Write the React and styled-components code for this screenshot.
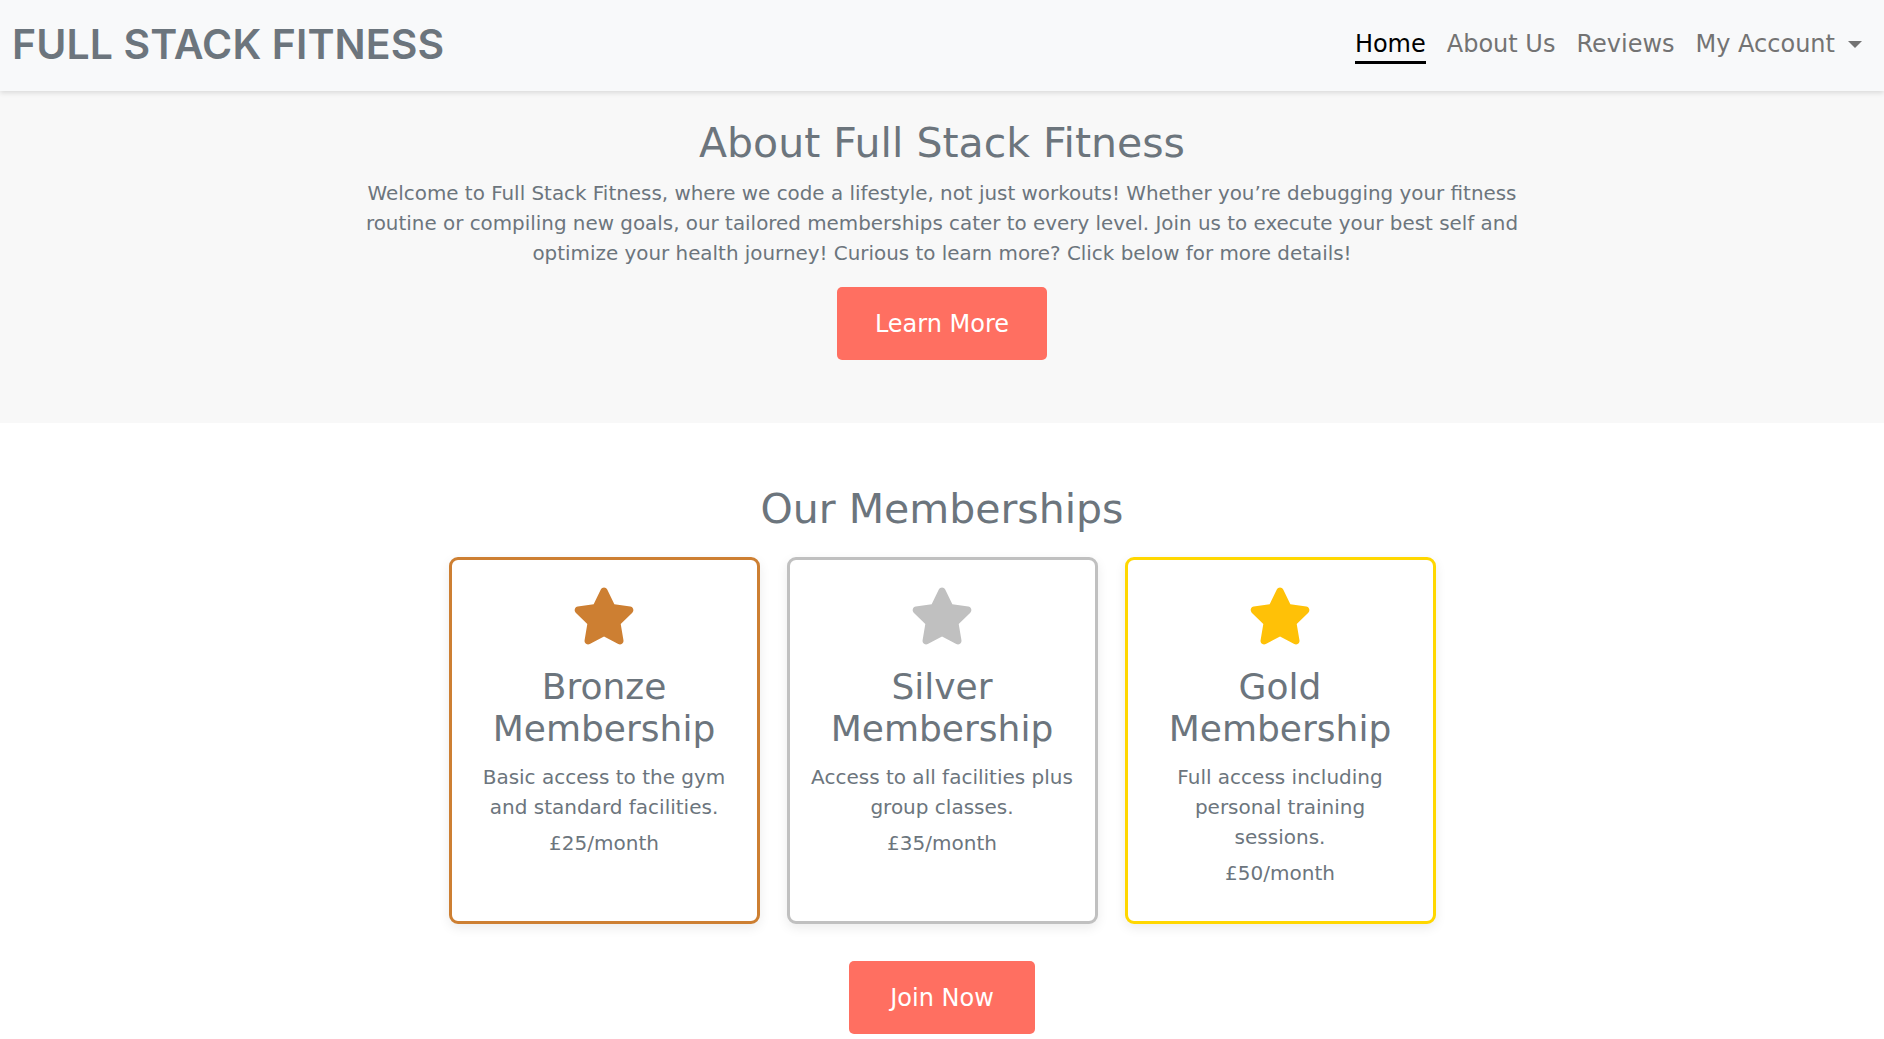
import React from "react"
import styled, { createGlobalStyle } from "styled-components"
import { FaStar } from "react-icons/fa6"

const GlobalStyle = createGlobalStyle`
  * { box-sizing: border-box; }
  body {
    margin: 0;
    font-family: "DejaVu Sans", "Liberation Sans", sans-serif;
    color: #6c757d;
    background: #fff;
  }
`

const Navbar = styled.nav`
  height: 91px;
  display: flex;
  align-items: center;
  justify-content: space-between;
  padding: 0 22px 0 12px;
  background: #f8f9fa;
  box-shadow: 0 2px 5px rgba(0, 0, 0, 0.12);
  position: relative;
  z-index: 1;
`

const Brand = styled.a`
  font-family: Inter, "DejaVu Sans", sans-serif;
  font-size: 41px;
  font-weight: 600;
  letter-spacing: 0.1px;
  color: #6c757d;
  text-decoration: none;
  margin-top: -3px;
`

const NavLinks = styled.ul`
  display: flex;
  align-items: center;
  gap: 21px;
  list-style: none;
  margin: 0;
  padding: 0;
`

const NavLink = styled.a`
  font-size: 24px;
  color: ${p => (p.$active ? "#000" : "#737373")};
  text-decoration: none;
  padding-bottom: 3px;
  border-bottom: 3px solid ${p => (p.$active ? "#000" : "transparent")};
  display: inline-flex;
  align-items: center;
  margin-top: 3px;
`

const Caret = styled.span`
  display: inline-block;
  margin-left: 13px;
  border-top: 7px solid #737373;
  border-left: 7px solid transparent;
  border-right: 7px solid transparent;
`

const Hero = styled.section`
  background: #f8f8f8;
  padding: 28px 20px 63px;
  text-align: center;
`

const SectionTitle = styled.h2`
  font-size: 41px;
  font-weight: 400;
  line-height: 48px;
  margin: 0;
  color: #6c757d;
`

const Lead = styled.p`
  max-width: 1200px;
  margin: 12px auto 18px;
  font-size: 19.9px;
  line-height: 30px;
  color: #6c757d;
`

const Button = styled.a`
  display: inline-flex;
  align-items: center;
  justify-content: center;
  height: 73px;
  padding: 0 ${p => p.$px || 36}px;
  background: #ff6f61;
  color: #fff;
  font-size: 24px;
  border-radius: 5px;
  text-decoration: none;
`

const Memberships = styled.section`
  padding: 62px 20px 8px;
  text-align: center;
  background: #fff;
`

const Cards = styled.div`
  display: grid;
  grid-template-columns: repeat(3, 311px);
  gap: 27px;
  justify-content: center;
  margin: 24px 0 37px;
`

const Card = styled.div`
  border: 3px solid ${p => p.$color};
  border-radius: 9px;
  padding: 26px 14px 33px;
  box-shadow: 0 4px 12px rgba(0, 0, 0, 0.08);
  background: #fff;
`

const StarIcon = styled(FaStar)`
  display: block;
  margin: 0 auto;
  width: 64px;
  height: 60px;
  color: ${p => p.$color};
`

const CardTitle = styled.h3`
  font-size: 36px;
  font-weight: 400;
  line-height: 42px;
  margin: 20px 0 12px;
  color: #6c757d;
`

const CardText = styled.p`
  font-size: 20px;
  line-height: 30px;
  margin: 0 0 6px;
  color: #6c757d;
`

const Price = styled.p`
  font-size: 20px;
  line-height: 30px;
  margin: 0;
  color: #6c757d;
`

const plans = [
  {
    name: "Bronze",
    border: "#cd7f32",
    star: "#cd7f32",
    text: ["Basic access to the gym", "and standard facilities."],
    price: "£25/month",
  },
  {
    name: "Silver",
    border: "#c0c0c0",
    star: "#c0c0c0",
    text: ["Access to all facilities plus", "group classes."],
    price: "£35/month",
  },
  {
    name: "Gold",
    border: "#ffd700",
    star: "#ffc107",
    text: ["Full access including", "personal training", "sessions."],
    price: "£50/month",
  },
]

const App = () => {
  return (
    <>
      <GlobalStyle />
      <Navbar>
        <Brand href="#">FULL STACK FITNESS</Brand>
        <NavLinks>
          <li><NavLink href="#" $active>Home</NavLink></li>
          <li><NavLink href="#">About Us</NavLink></li>
          <li><NavLink href="#">Reviews</NavLink></li>
          <li><NavLink href="#">My Account<Caret /></NavLink></li>
        </NavLinks>
      </Navbar>

      <Hero>
        <SectionTitle>About Full Stack Fitness</SectionTitle>
        <Lead>
          Welcome to Full Stack Fitness, where we code a lifestyle, not just workouts! Whether you’re debugging your fitness
          <br />
          routine or compiling new goals, our tailored memberships cater to every level. Join us to execute your best self and
          <br />
          optimize your health journey! Curious to learn more? Click below for more details!
        </Lead>
        <Button href="#" $px={38}>Learn More</Button>
      </Hero>

      <Memberships>
        <SectionTitle>Our Memberships</SectionTitle>
        <Cards>
          {plans.map(p => (
            <Card key={p.name} $color={p.border}>
              <StarIcon $color={p.star} />
              <CardTitle>
                {p.name}
                <br />
                Membership
              </CardTitle>
              <CardText>
                {p.text.map((line, i) => (
                  <React.Fragment key={i}>
                    {i > 0 && <br />}
                    {line}
                  </React.Fragment>
                ))}
              </CardText>
              <Price>{p.price}</Price>
            </Card>
          ))}
        </Cards>
        <Button href="#" $px={41}>Join Now</Button>
      </Memberships>
    </>
  )
}

export default App
